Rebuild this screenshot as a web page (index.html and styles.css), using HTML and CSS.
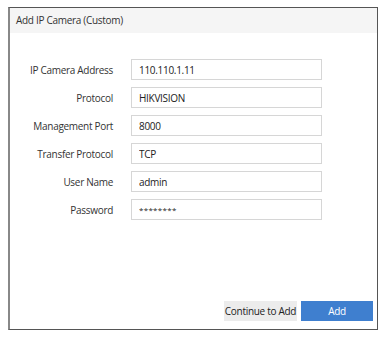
FILE: index.html
```html
<!DOCTYPE html>
<html lang="en">
<head>
    <meta charset="UTF-8">
    <meta name="viewport" content="width=device-width, initial-scale=1.0">
    <title>Add IP Camera (Custom)</title>
    <link rel="stylesheet" href="styles.css">
</head>
<body>
    <div class="dialog">
        <div class="dialog-header">Add IP Camera (Custom)</div>
        <div class="dialog-body">
            <div class="form-row">
                <label>IP Camera Address</label>
                <input type="text" value="110.110.1.11">
            </div>
            <div class="form-row">
                <label>Protocol</label>
                <input type="text" value="HIKVISION">
            </div>
            <div class="form-row">
                <label>Management Port</label>
                <input type="text" value="8000">
            </div>
            <div class="form-row">
                <label>Transfer Protocol</label>
                <input type="text" value="TCP">
            </div>
            <div class="form-row">
                <label>User Name</label>
                <input type="text" value="admin">
            </div>
            <div class="form-row">
                <label>Password</label>
                <input type="text" class="masked" value="********">
            </div>
        </div>
        <div class="dialog-footer">
            <button class="btn">Continue to Add</button>
            <button class="btn btn-primary">Add</button>
        </div>
    </div>
</body>
</html>
```

FILE: styles.css
```css
* {
    box-sizing: border-box;
    margin: 0;
    padding: 0;
}

body {
    background: #fff;
    font-family: "Open Sans", Arial, sans-serif;
    font-size: 10px;
    letter-spacing: -0.3px;
    color: #333;
}

.dialog {
    display: flex;
    flex-direction: column;
    width: 370px;
    height: 323px;
    margin: 7px 8px;
    border: 1px solid #555;
    border-left: 2px solid #888;
    background: #fff;
}

.dialog-header {
    height: 25px;
    padding: 0 0 0 6px;
    line-height: 25px;
    background: #f5f5f5;
    color: #333;
}

.dialog-body {
    display: flex;
    flex-direction: column;
    gap: 7px;
    padding-top: 26px;
}

.form-row {
    display: flex;
    align-items: center;
}

.form-row label {
    width: 103px;
    margin-right: 18px;
    text-align: right;
    color: #333;
}

.form-row input {
    width: 191px;
    height: 21px;
    padding: 0 7px;
    border: 1px solid #d6d6d6;
    font-family: inherit;
    font-size: 10px;
    letter-spacing: -0.3px;
    color: #222;
    outline: none;
}

.form-row input.masked {
    font-size: 8px;
    letter-spacing: 0.3px;
}

.dialog-footer {
    display: flex;
    justify-content: flex-end;
    gap: 4px;
    margin-top: auto;
    padding: 0 4px 8px 0;
}

.btn {
    width: 73px;
    height: 20px;
    padding: 0;
    border: none;
    background: #ececec;
    font-family: inherit;
    font-size: 10px;
    letter-spacing: -0.3px;
    white-space: nowrap;
    color: #222;
    cursor: pointer;
}

.btn-primary {
    width: 72px;
    background: #3f7fcf;
    color: #fff;
}
```
